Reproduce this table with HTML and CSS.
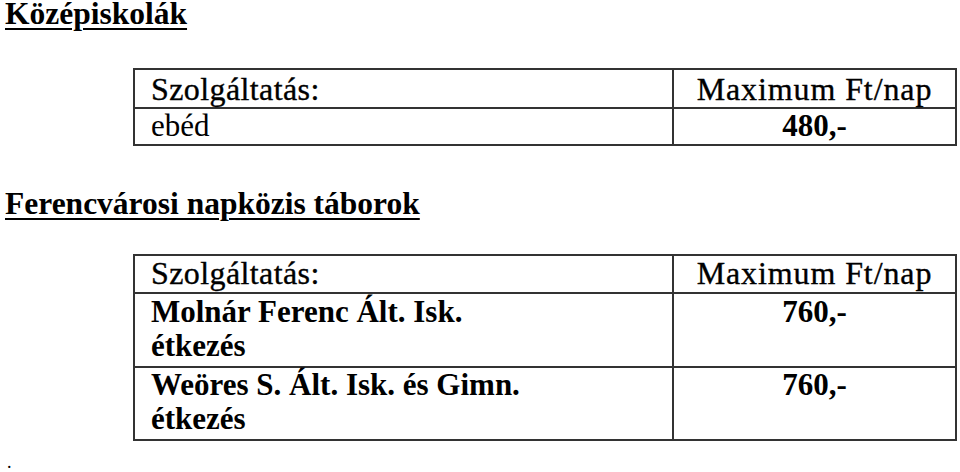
FILE: index.html
```html
<!DOCTYPE html>
<html lang="hu">
<head>
<meta charset="utf-8">
<title>Középiskolák</title>
<link rel="stylesheet" href="styles.css">
</head>
<body>
<h1 class="heading">Középiskolák</h1>

<div class="tbl tbl-first">
  <div class="cell head head-first">Szolgáltatás:</div>
  <div class="cell head head-first num">Maximum Ft/nap</div>
  <div class="cell plain compact">ebéd</div>
  <div class="cell bold num compact">480,-</div>
</div>

<h2 class="heading heading-second">Ferencvárosi napközis táborok</h2>

<div class="tbl tbl-second">
  <div class="cell head">Szolgáltatás:</div>
  <div class="cell head num">Maximum Ft/nap</div>
  <div class="cell bold tall">Molnár Ferenc Ált. Isk.<br>étkezés</div>
  <div class="cell bold num tall">760,-</div>
  <div class="cell bold tall last">Weöres S. Ált. Isk. és Gimn.<br>étkezés</div>
  <div class="cell bold num tall last">760,-</div>
</div>

<p class="dot">.</p>
</body>
</html>
```

FILE: styles.css
```css
html, body {
  margin: 0;
  padding: 0;
  background: #fff;
}

body {
  font-family: "Liberation Serif", "Times New Roman", serif;
  color: #000;
  width: 960px;
  height: 472px;
  overflow: hidden;
}

.heading {
  margin: 0;
  padding-left: 5px;
  font-size: 31.5px;
  font-weight: bold;
  line-height: 28px;
  text-decoration: underline;
  text-decoration-thickness: 2px;
  text-underline-offset: 4px;
}

.heading-second {
  margin-top: 44px;
}

.tbl {
  display: grid;
  grid-template-columns: 539px 1fr;
  width: 824px;
  box-sizing: border-box;
  margin-left: 133px;
  border-top: 2px solid #333;
  border-left: 2px solid #333;
}

.tbl-first {
  margin-top: 40px;
}

.tbl-second {
  margin-top: 36px;
}

.cell {
  border-right: 2px solid #333;
  border-bottom: 2px solid #333;
  padding: 1px 0 2px 16px;
  font-size: 31px;
  line-height: 34px;
}

.num {
  padding-left: 0;
  text-align: center;
}

.head {
  font-size: 32px;
  font-weight: normal;
  letter-spacing: 0.4px;
  -webkit-text-stroke: 0.35px #000;
  padding-top: 0;
  padding-bottom: 2px;
}

.head-first {
  padding-top: 2px;
  padding-bottom: 1px;
}

.num.head {
  letter-spacing: 0.9px;
}

.plain {
  font-weight: normal;
}

.bold {
  font-weight: bold;
}

.compact {
  padding-top: 0;
  padding-bottom: 1px;
}

.tall {
  padding-top: 1px;
  padding-bottom: 3px;
}

.tall.last {
  padding-top: 0;
}

.dot {
  margin: 11px 0 0;
  padding-left: 7px;
  font-size: 18px;
  line-height: 20px;
}
```
